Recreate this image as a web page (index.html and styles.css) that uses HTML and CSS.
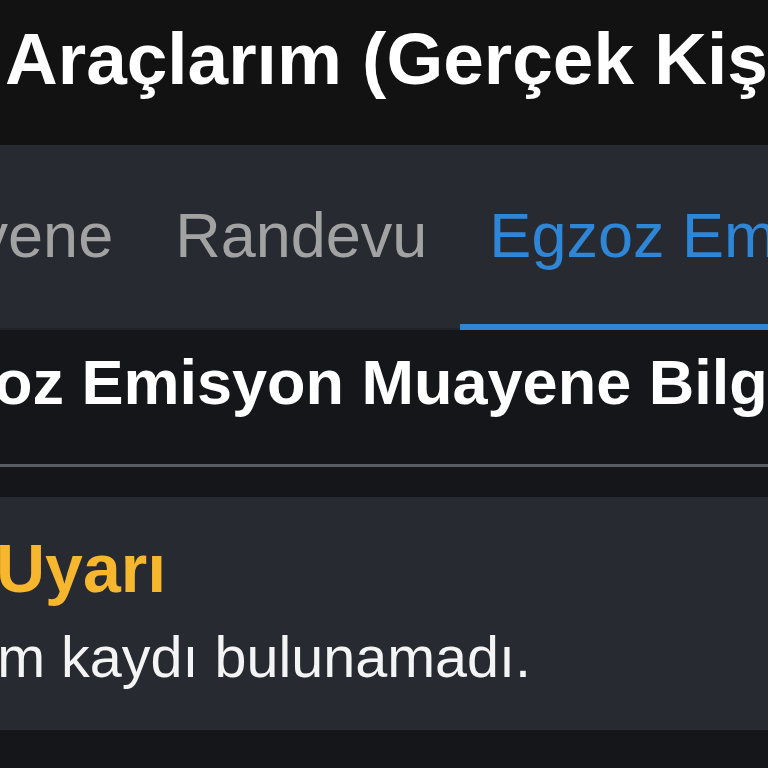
FILE: index.html
```html
<!DOCTYPE html>
<html lang="tr">
<head>
<meta charset="utf-8">
<title>Araçlarım</title>
<link rel="stylesheet" href="styles.css">
</head>
<body>
<div class="screen">
  <header class="appbar">
    <h1 class="appbar-title">Araçlarım (Gerçek Kişi)</h1>
  </header>
  <nav class="tabbar">
    <div class="tab-track">
      <div class="tab">Muayene</div>
      <div class="tab">Randevu</div>
      <div class="tab tab-active">Egzoz Emisyon</div>
    </div>
  </nav>
  <section class="section-head">
    <h2 class="section-title">Egzoz Emisyon Muayene Bilgileri</h2>
  </section>
  <div class="divider"></div>
  <div class="content">
    <div class="alert-card">
      <div class="alert-inner">
        <div class="alert-title">Uyarı</div>
        <div class="alert-text">Ölçüm kaydı bulunamadı.</div>
      </div>
    </div>
  </div>
</div>
</body>
</html>
```
FILE: styles.css
```css
html, body {
  margin: 0;
  padding: 0;
  background: #15161a;
}
body {
  font-family: "Liberation Sans", Arial, sans-serif;
  width: 768px;
  height: 768px;
  overflow: hidden;
}
.screen {
  width: 768px;
  height: 768px;
  overflow: hidden;
  display: flex;
  flex-direction: column;
  background: #15161a;
}
.appbar {
  height: 145px;
  box-sizing: border-box;
  background: #121212;
  padding: 22px 0 0 5px;
  flex: none;
}
.appbar-title {
  margin: 0;
  font-size: 73px;
  line-height: 73px;
  font-weight: 700;
  color: #ffffff;
  white-space: nowrap;
}
.tabbar {
  height: 185px;
  background: #272a31;
  flex: none;
  overflow: hidden;
  box-shadow: inset 0 -2px 0 #202328;
}
.tab-track {
  display: flex;
  gap: 4px;
  margin-left: -175px;
  height: 100%;
}
.tab {
  flex: none;
  box-sizing: border-box;
  height: 185px;
  padding: 59px 29px 0;
  font-size: 63px;
  line-height: 63px;
  color: #a2a2a2;
  white-space: nowrap;
  border-bottom: 6px solid transparent;
}
.tab-active {
  color: #2f86d6;
  border-bottom-color: #2f84d4;
  padding-right: 60px;
}
.section-head {
  height: 134px;
  box-sizing: border-box;
  background: #15161a;
  padding-top: 21px;
  flex: none;
  overflow: hidden;
}
.section-title {
  margin: 0 0 0 -118px;
  font-size: 63px;
  line-height: 63px;
  font-weight: 700;
  color: #ffffff;
  white-space: nowrap;
}
.divider {
  height: 3px;
  background: #5a5d62;
  flex: none;
}
.content {
  padding-top: 30px;
  flex: 1;
  background: #15161a;
}
.alert-card {
  height: 233px;
  box-sizing: border-box;
  background: #272a31;
  padding: 37px 0 0;
  overflow: hidden;
}
.alert-inner {
  display: flex;
  flex-direction: column;
  gap: 27px;
}
.alert-title {
  margin-left: -4px;
  font-size: 68px;
  line-height: 68px;
  font-weight: 700;
  color: #f6b62e;
  white-space: nowrap;
}
.alert-text {
  margin-left: -121px;
  font-size: 57.5px;
  line-height: 57.5px;
  color: #f4f4f4;
  white-space: nowrap;
}
```
